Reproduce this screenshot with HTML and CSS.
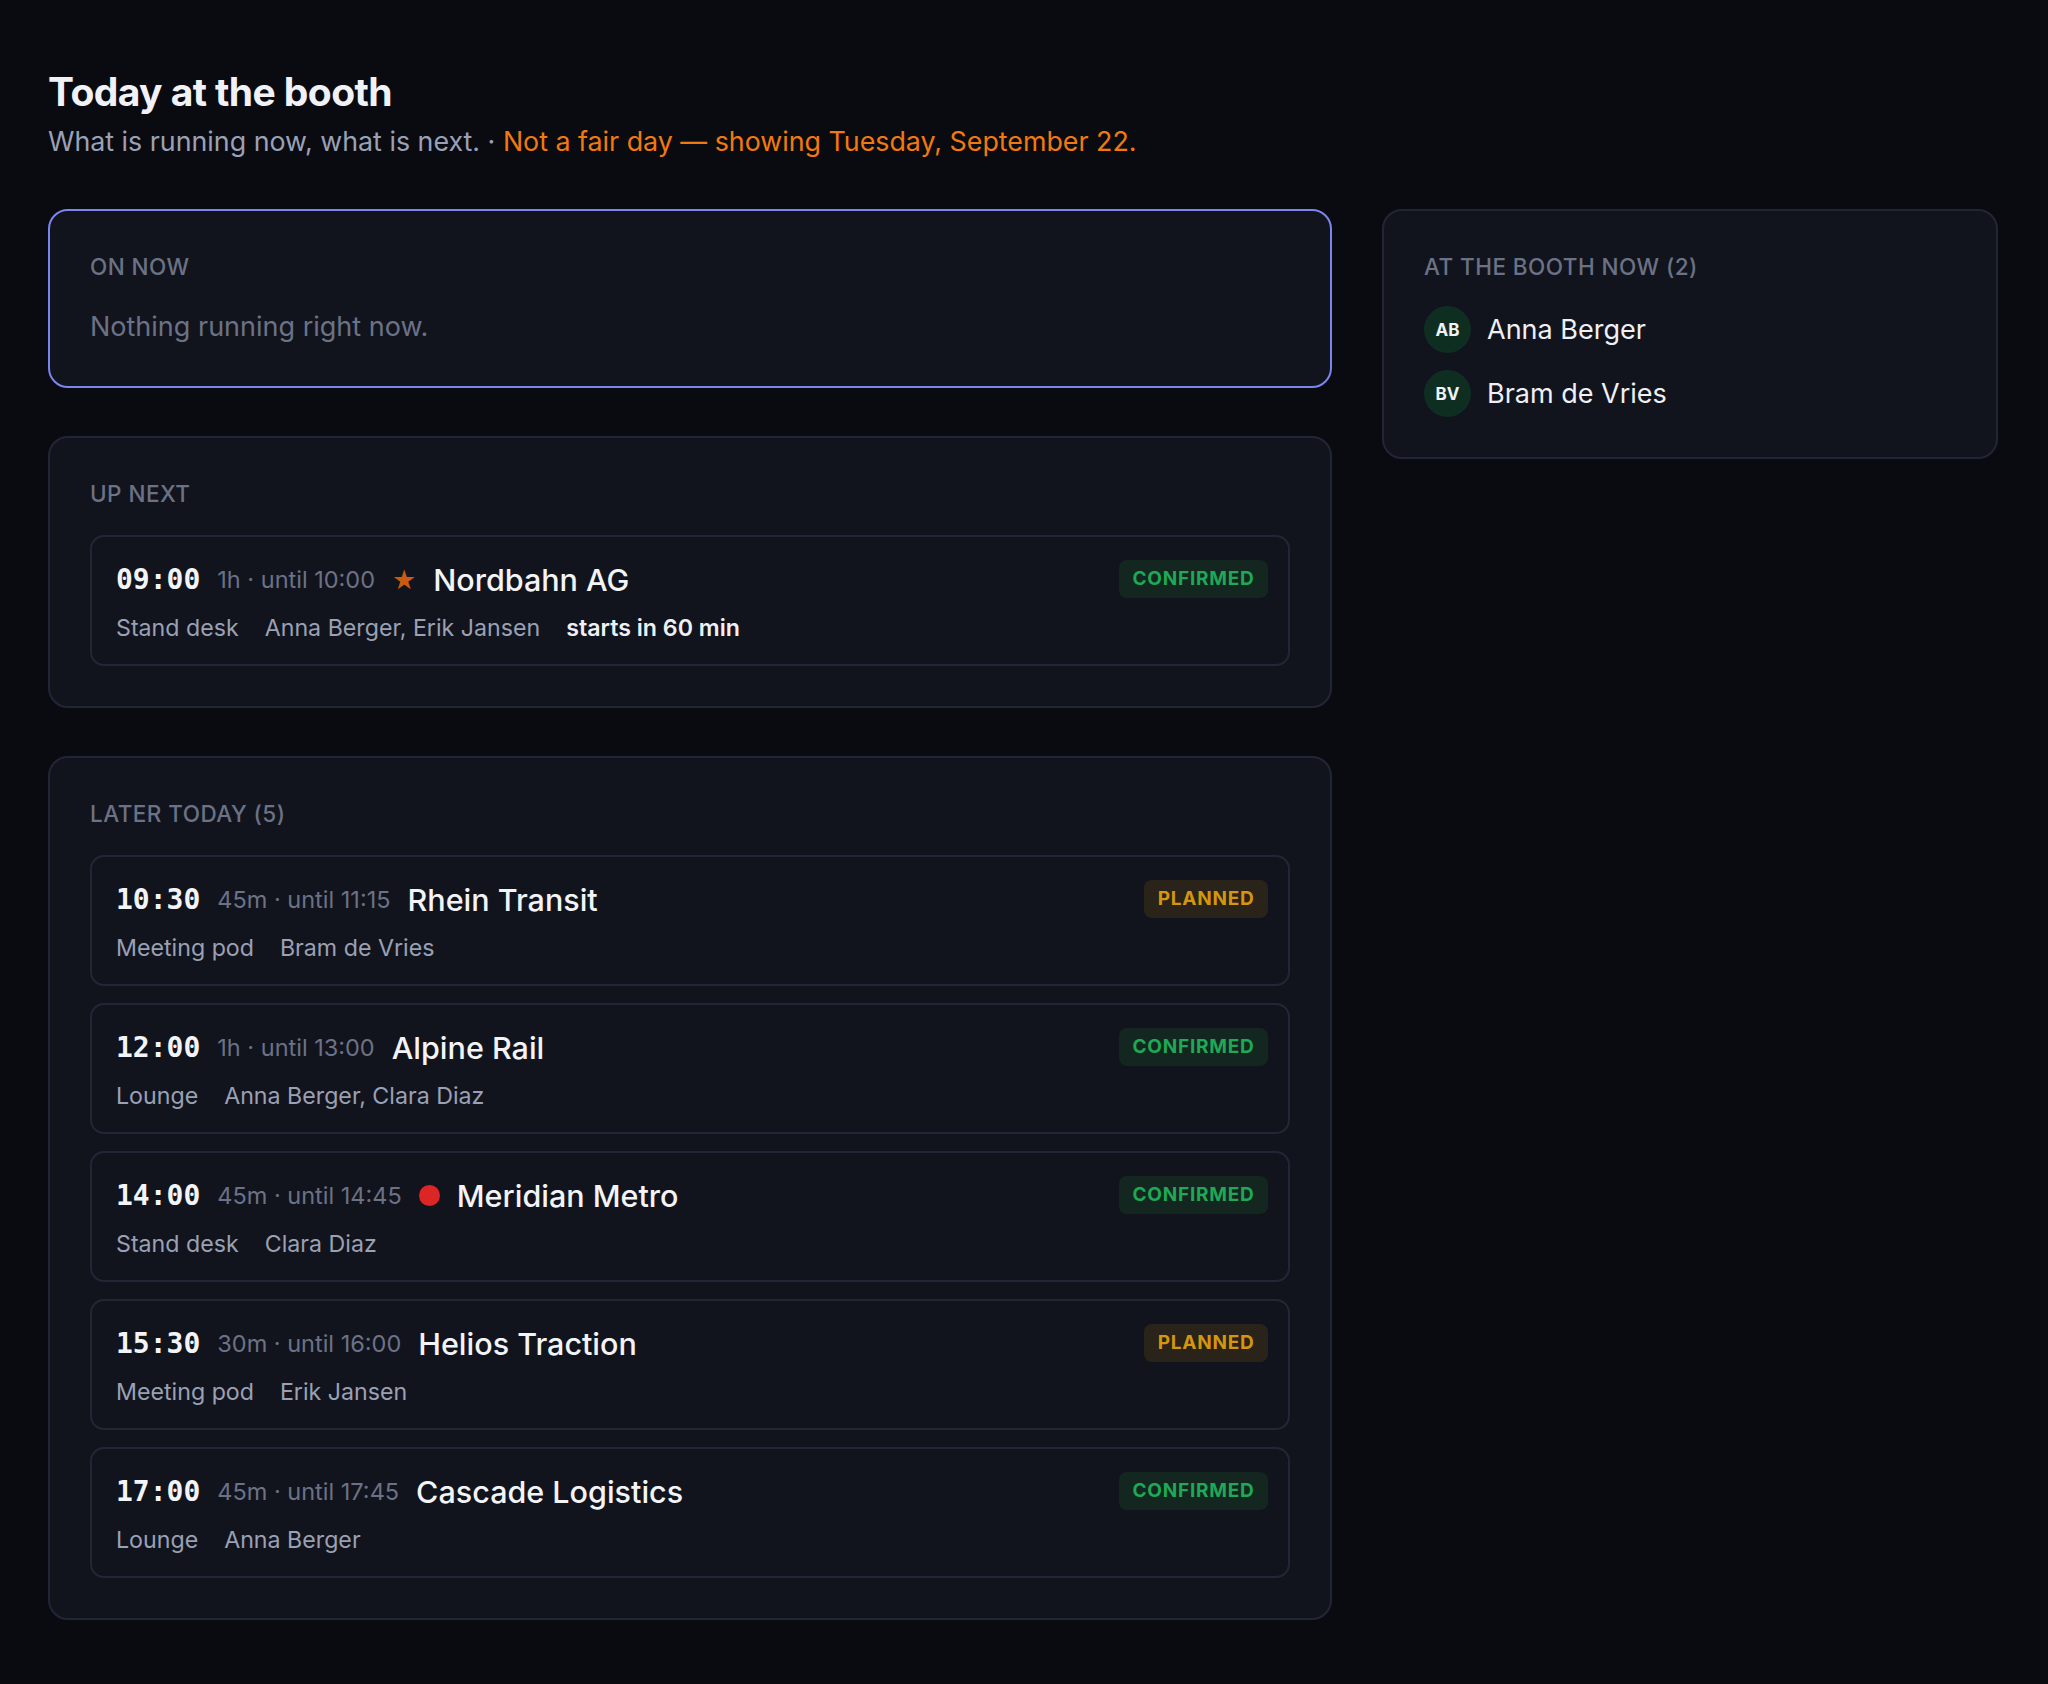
FILE: index.html
```html
<!DOCTYPE html>
<html lang="en">
<head>
  <meta charset="UTF-8" />
  <title>Booth - Today</title>
  <meta name="viewport" content="width=device-width, initial-scale=1" />
  <link rel="stylesheet" href="styles.css">
</head>
<body>

  <div class="page">
    <!-- TITLE -->
    <h1>Today at the booth</h1>
    <p class="subtitle">What is running now, what is next. · <span class="warn">Not a fair day — showing Tuesday, September 22.</span></p>

    <div class="layout">
      <!-- LEFT COLUMN -->
      <div class="main-col">
        <section class="card card-live">
          <div class="card-label">On now</div>
          <div class="empty">Nothing running right now.</div>
        </section>

        <section class="card">
          <div class="card-label">Up next</div>
          <div class="slot">
            <div class="slot-top">
              <span class="time">09:00</span>
              <span class="dur">1h · until 10:00</span>
              <span class="star">★</span>
              <span class="who">Nordbahn AG</span>
              <span class="badge confirmed">Confirmed</span>
            </div>
            <div class="slot-sub">
              <span>Stand desk</span>
              <span>Anna Berger, Erik Jansen</span>
              <span class="soon">starts in 60 min</span>
            </div>
          </div>
        </section>

        <section class="card">
          <div class="card-label">Later today (5)</div>
          <div class="slots">
            <div class="slot">
              <div class="slot-top">
                <span class="time">10:30</span>
                <span class="dur">45m · until 11:15</span>
                <span class="who">Rhein Transit</span>
                <span class="badge planned">Planned</span>
              </div>
              <div class="slot-sub">
                <span>Meeting pod</span>
                <span>Bram de Vries</span>
              </div>
            </div>

            <div class="slot">
              <div class="slot-top">
                <span class="time">12:00</span>
                <span class="dur">1h · until 13:00</span>
                <span class="who">Alpine Rail</span>
                <span class="badge confirmed">Confirmed</span>
              </div>
              <div class="slot-sub">
                <span>Lounge</span>
                <span>Anna Berger, Clara Diaz</span>
              </div>
            </div>

            <div class="slot">
              <div class="slot-top">
                <span class="time">14:00</span>
                <span class="dur">45m · until 14:45</span>
                <span class="dot"></span>
                <span class="who">Meridian Metro</span>
                <span class="badge confirmed">Confirmed</span>
              </div>
              <div class="slot-sub">
                <span>Stand desk</span>
                <span>Clara Diaz</span>
              </div>
            </div>

            <div class="slot">
              <div class="slot-top">
                <span class="time">15:30</span>
                <span class="dur">30m · until 16:00</span>
                <span class="who">Helios Traction</span>
                <span class="badge planned">Planned</span>
              </div>
              <div class="slot-sub">
                <span>Meeting pod</span>
                <span>Erik Jansen</span>
              </div>
            </div>

            <div class="slot">
              <div class="slot-top">
                <span class="time">17:00</span>
                <span class="dur">45m · until 17:45</span>
                <span class="who">Cascade Logistics</span>
                <span class="badge confirmed">Confirmed</span>
              </div>
              <div class="slot-sub">
                <span>Lounge</span>
                <span>Anna Berger</span>
              </div>
            </div>
          </div>
        </section>
      </div>

      <!-- RIGHT COLUMN -->
      <aside class="side-col">
        <section class="card">
          <div class="card-label">At the booth now (2)</div>
          <ul class="people">
            <li><span class="avatar">AB</span> Anna Berger</li>
            <li><span class="avatar">BV</span> Bram de Vries</li>
          </ul>
        </section>
      </aside>
    </div>
  </div>

</body>
</html>
```

FILE: styles.css
```css
* {
  box-sizing: border-box;
}

body, html {
  margin: 0;
  padding: 0;
  font-family: Inter, "Noto Sans", sans-serif;
  background: #0a0b10;
  color: #e5e7eb;
  min-height: 100vh;
}

.page {
  padding: 69px 50px 48px 48px;
}

/* TITLE */
h1 {
  margin: 0;
  font-size: 39px;
  line-height: 46px;
  font-weight: 700;
  letter-spacing: -0.015em;
  color: #f1f2f8;
}

.subtitle {
  margin: 9px 0 51px;
  font-size: 26.8px;
  line-height: 34px;
  color: #9aa1b7;
}

.warn {
  color: #f2790f;
}

/* LAYOUT */
.layout {
  display: grid;
  grid-template-columns: 1fr 616px;
  gap: 50px;
  align-items: start;
}

.main-col {
  display: flex;
  flex-direction: column;
  gap: 48px;
}

/* CARDS */
.card {
  background: #12141d;
  border: 2px solid #222536;
  border-radius: 20px;
  padding: 40px;
}

.card-live {
  border-color: #7c85ee;
}

.card-label {
  font-size: 22.5px;
  line-height: 32px;
  font-weight: 500;
  text-transform: uppercase;
  letter-spacing: 0.02em;
  color: #6b7286;
  margin-bottom: 25px;
}

.empty {
  font-size: 27px;
  line-height: 38px;
  color: #6b7286;
}

/* SLOTS */
.slots {
  display: flex;
  flex-direction: column;
  gap: 17px;
}

.slot {
  border: 2px solid #232637;
  border-radius: 14px;
  padding: 20px 20px 20px 24px;
}

.slot-top {
  display: flex;
  align-items: center;
  gap: 17px;
  height: 44px;
}

.time {
  font-family: "DejaVu Sans Mono", monospace;
  font-weight: 700;
  font-size: 28px;
  color: #f3f4f8;
}

.dur {
  font-size: 23.5px;
  color: #6b7286;
}

.star {
  font-family: "DejaVu Sans", sans-serif;
  font-size: 27px;
  color: #c95c12;
}

.dot {
  width: 21px;
  height: 21px;
  border-radius: 50%;
  background: #dc2626;
}

.who {
  font-size: 30.5px;
  font-weight: 500;
  color: #f3f4f8;
}

.badge {
  margin-left: auto;
  padding: 0 13.5px;
  height: 38px;
  line-height: 38px;
  border-radius: 8px;
  font-size: 19px;
  font-weight: 700;
  letter-spacing: 0.04em;
  text-transform: uppercase;
}

.confirmed {
  background: #13261f;
  color: #1fa855;
}

.planned {
  background: #2a2319;
  color: #d4960f;
}

.slot-sub {
  display: flex;
  gap: 26px;
  margin-top: 11px;
  font-size: 23.2px;
  line-height: 32px;
  color: #9aa1b5;
}

.soon {
  font-weight: 600;
  color: #eef0f5;
}

/* PEOPLE */
.people {
  list-style: none;
  margin: 0;
  padding: 0;
  display: flex;
  flex-direction: column;
  gap: 17px;
  margin-top: -2px;
}

.people li {
  display: flex;
  align-items: center;
  gap: 16px;
  font-size: 27px;
  color: #eef0f5;
}

.avatar {
  width: 47px;
  height: 47px;
  border-radius: 50%;
  background: #0f2e22;
  color: #f0f2f5;
  font-size: 17px;
  font-weight: 700;
  display: flex;
  align-items: center;
  justify-content: center;
}
```
